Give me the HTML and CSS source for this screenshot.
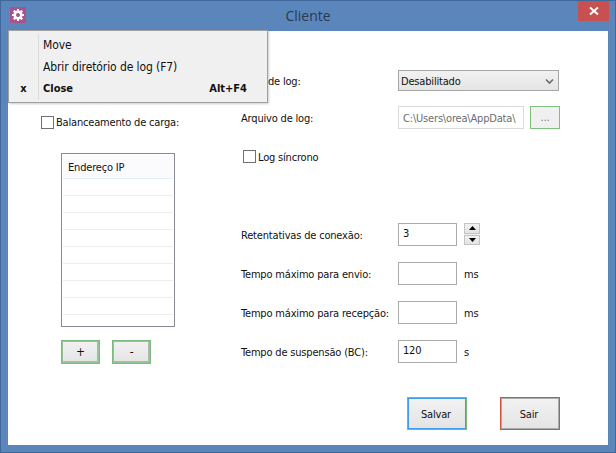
FILE: index.html
```html
<!DOCTYPE html>
<html>
<head>
    <title>Cliente</title>
    <link rel="icon" href="data:;base64,iVBORw0KGgo=">
    <link rel="stylesheet" href="styles.css">
</head>
<body>
    <div class="window">
        <div class="titlebar">
            <div class="app-icon">
                <svg width="16" height="16" viewBox="0 0 16 16">
                    <path fill="#fff" d="M7 2h2v1.600l1.200.5L11.400 3l1.600 1.600-1.100 1.200.5 1.200H14v2h-1.600l-.5 1.200 1.100 1.200-1.600 1.600-1.200-1.100-1.200.5V14H7v-1.600l-1.200-.5L4.600 13 3 11.400l1.100-1.200-.5-1.200H2V7h1.600l.5-1.200L3 4.600 4.600 3l1.200 1.100L7 3.600z"/>
                    <circle cx="8" cy="8" r="2" fill="#a8538c"/>
                </svg>
            </div>
            <div class="title">Cliente</div>
            <div class="close-btn">
                <svg width="10" height="10" viewBox="0 0 10 10">
                    <path stroke="#fff" stroke-width="2" d="M1 1.500L9 8.500M9 1.500L1 8.500"/>
                </svg>
            </div>
        </div>

        <div class="client">
            <div class="left-col">
                <label class="check"><span class="box"></span>Balanceamento de carga:</label>
                <div class="ip-list">
                    <div class="ip-header">Endereço IP</div>
                    <div class="ip-row"></div>
                    <div class="ip-row"></div>
                    <div class="ip-row"></div>
                    <div class="ip-row"></div>
                    <div class="ip-row"></div>
                    <div class="ip-row"></div>
                    <div class="ip-row"></div>
                    <div class="ip-row"></div>
                </div>
                <div class="list-buttons">
                    <button class="btn btn-small">+</button>
                    <button class="btn btn-small">-</button>
                </div>
            </div>

            <div class="right-col">
                <div class="row row-log">
                    <span class="label">Nível de log:</span>
                    <div class="select">
                        <span>Desabilitado</span>
                        <svg width="9" height="7" viewBox="0 0 9 7">
                            <path fill="none" stroke="#6a6a6a" stroke-width="1.600" d="M1 1.500L4.500 5L8 1.500"/>
                        </svg>
                    </div>
                </div>
                <div class="row row-file">
                    <span class="label">Arquivo de log:</span>
                    <input class="input input-file" type="text" value="C:\Users\orea\AppData\" disabled>
                    <button class="btn btn-browse">...</button>
                </div>
                <label class="check check-sync"><span class="box"></span><span class="sync-text">Log síncrono</span></label>

                <div class="row row-first">
                    <span class="label">Retentativas de conexão:</span>
                    <input class="input" type="text" value="3">
                    <div class="spinner">
                        <div class="spin-btn"><svg width="7" height="4" viewBox="0 0 7 4"><path d="M3.500 0L7 4H0z"/></svg></div>
                        <div class="spin-btn"><svg width="7" height="4" viewBox="0 0 7 4"><path d="M0 0h7L3.500 4z"/></svg></div>
                    </div>
                </div>
                <div class="row row-next">
                    <span class="label">Tempo máximo para envio:</span>
                    <input class="input" type="text">
                    <span class="unit">ms</span>
                </div>
                <div class="row row-next">
                    <span class="label">Tempo máximo para recepção:</span>
                    <input class="input" type="text">
                    <span class="unit">ms</span>
                </div>
                <div class="row row-next">
                    <span class="label">Tempo de suspensão (BC):</span>
                    <input class="input" type="text" value="120">
                    <span class="unit">s</span>
                </div>

                <div class="actions">
                    <button class="btn btn-action btn-save">Salvar</button>
                    <button class="btn btn-action btn-exit">Sair</button>
                </div>
            </div>
        </div>

        <!-- system menu opened over the form -->
        <div class="sys-menu">
            <div class="menu-item"><span class="menu-mark"></span><span>Move</span></div>
            <div class="menu-item"><span class="menu-mark"></span><span>Abrir diretório de log (F7)</span></div>
            <div class="menu-item menu-bold"><span class="menu-mark">x</span><span>Close</span><span class="shortcut">Alt+F4</span></div>
        </div>
    </div>
</body>
</html>
```

FILE: styles.css
```css
html, body {
    margin: 0;
    padding: 0;
}
body {
    font-family: "DejaVu Sans Condensed", "DejaVu Sans", sans-serif;
    font-stretch: condensed;
    font-size: 11px;
    letter-spacing: -0.18px;
    color: #111;
    overflow: hidden;
}
.window {
    position: relative;
    width: 616px;
    height: 453px;
    box-sizing: border-box;
    background-color: #5a86bc;
    border: 1px solid #41689c;
    padding: 0 7px 7px 7px;
    display: flex;
    flex-direction: column;
}
.titlebar {
    height: 30px;
    display: flex;
    position: relative;
    justify-content: center;
}
.app-icon {
    position: absolute;
    left: 2px;
    top: 6px;
    width: 16px;
    height: 16px;
    background-color: #a8538c;
}
.title {
    font-family: "Open Sans", sans-serif;
    font-stretch: normal;
    letter-spacing: 0;
    font-size: 14px;
    color: #2c3a4c;
    line-height: 30px;
}
.close-btn {
    position: absolute;
    right: -1px;
    top: 0;
    width: 31px;
    height: 20px;
    background-color: #c75050;
    display: flex;
    align-items: center;
    justify-content: center;
}
.client {
    flex: 1;
    background-color: #fff;
    display: flex;
}
.left-col {
    width: 233px;
    flex: none;
    box-sizing: border-box;
    padding: 85px 0 0 33px;
}
.check {
    display: flex;
    align-items: center;
    height: 13px;
    line-height: 13px;
}
.box {
    width: 11px;
    height: 11px;
    border: 1px solid #707070;
    background-color: #fff;
    margin-right: 2px;
    flex: none;
}
.ip-list {
    width: 114px;
    height: 174px;
    box-sizing: border-box;
    margin: 24px 0 0 20px;
    border: 1px solid #8a8a96;
    padding: 1px;
}
.ip-header {
    height: 23px;
    line-height: 25px;
    padding-left: 5px;
    background-color: #fbfbfd;
    border-bottom: 1px solid #e6eef8;
}
.ip-row {
    height: 16px;
    border-bottom: 1px solid #eeeeee;
}
.list-buttons {
    display: flex;
    gap: 12px;
    margin: 13px 0 0 20px;
}
.btn {
    font-family: inherit;
    font-stretch: inherit;
    letter-spacing: inherit;
    font-size: 11px;
    color: #111;
    padding: 0;
    background: linear-gradient(#f2f2f2, #e4e4e4);
    box-sizing: border-box;
}
.btn-small {
    width: 39px;
    height: 24px;
    border: 1px solid #7fb97f;
    box-shadow: inset 0 0 0 1px #93c493, inset -1px -1px 0 1px #b4b4b4;
    font-size: 12px;
}
.right-col {
    flex: 1;
    padding-top: 39px;
}
.row {
    display: flex;
    align-items: center;
    height: 23px;
}
.row-log {
    height: 21px;
}
.row-file {
    margin-top: 15px;
}
.row-first {
    margin-top: 60px;
}
.row-next {
    margin-top: 16px;
}
.label {
    width: 157px;
    flex: none;
    padding-top: 2px;
}
.select {
    width: 161px;
    height: 21px;
    box-sizing: border-box;
    border: 1px solid #a6a6a6;
    background: linear-gradient(#f2f2f2, #e4e4e4);
    display: flex;
    align-items: center;
    justify-content: space-between;
    padding: 2px 4px 0 2px;
}
.input {
    width: 59px;
    height: 23px;
    box-sizing: border-box;
    border: 1px solid #ababab;
    padding: 0 4px 2px 4px;
    font-family: inherit;
    font-stretch: inherit;
    letter-spacing: inherit;
    font-size: 11px;
    color: #111;
    background-color: #fff;
    outline: none;
}
.input-file {
    width: 126px;
    border-color: #dadada;
    color: #6d6d6d;
    padding-bottom: 0;
    padding-top: 2px;
}
.btn-browse {
    width: 30px;
    height: 23px;
    margin-left: 6px;
    border: 1px solid #7fc07f;
    background: #f0f0f0;
    color: #777;
}
.unit {
    margin-left: 7px;
    padding-top: 2px;
}
.spinner {
    margin-left: 7px;
    width: 16px;
    height: 22px;
    display: flex;
    flex-direction: column;
    gap: 1px;
    align-self: flex-start;
    background-color: #f0f0f0;
}
.spin-btn {
    flex: 1;
    box-sizing: border-box;
    border: 1px solid #c4c4c4;
    background: linear-gradient(#f2f2f2, #e4e4e4);
    display: flex;
    align-items: center;
    justify-content: center;
}
.check-sync {
    margin: 21px 0 0 2px;
}
.sync-text {
    padding-top: 2px;
}
.actions {
    display: flex;
    gap: 33px;
    margin: 34px 0 0 166px;
}
.btn-action {
    width: 60px;
    height: 33px;
    padding: 2px 2px 0 0;
}
.btn-save {
    border: 2px solid #3f9cf0;
    outline: 1px solid #7fb97f;
    outline-offset: -1px;
}
.btn-exit {
    border: 1px solid #d0533f;
    box-shadow: inset 0 0 0 1px #ababab;
}
.sys-menu {
    position: absolute;
    left: 7px;
    top: 29px;
    width: 260px;
    height: 73px;
    box-sizing: border-box;
    padding: 3px 0;
    background-color: #f0f0f0;
    border: 1px solid #a0a0a0;
    box-shadow: 1px 1px 2px rgba(0,0,0,0.2);
    font-size: 12px;
    letter-spacing: -0.1px;
}
.menu-item {
    height: 22px;
    line-height: 22px;
    display: flex;
}
.menu-mark {
    width: 29px;
    text-align: center;
    border-right: 1px solid #dcdcdc;
    margin-right: 4px;
    flex: none;
}
.menu-bold {
    font-weight: bold;
    font-size: 11px;
    letter-spacing: 0;
}
.shortcut {
    margin-left: auto;
    padding-right: 20px;
}
```
